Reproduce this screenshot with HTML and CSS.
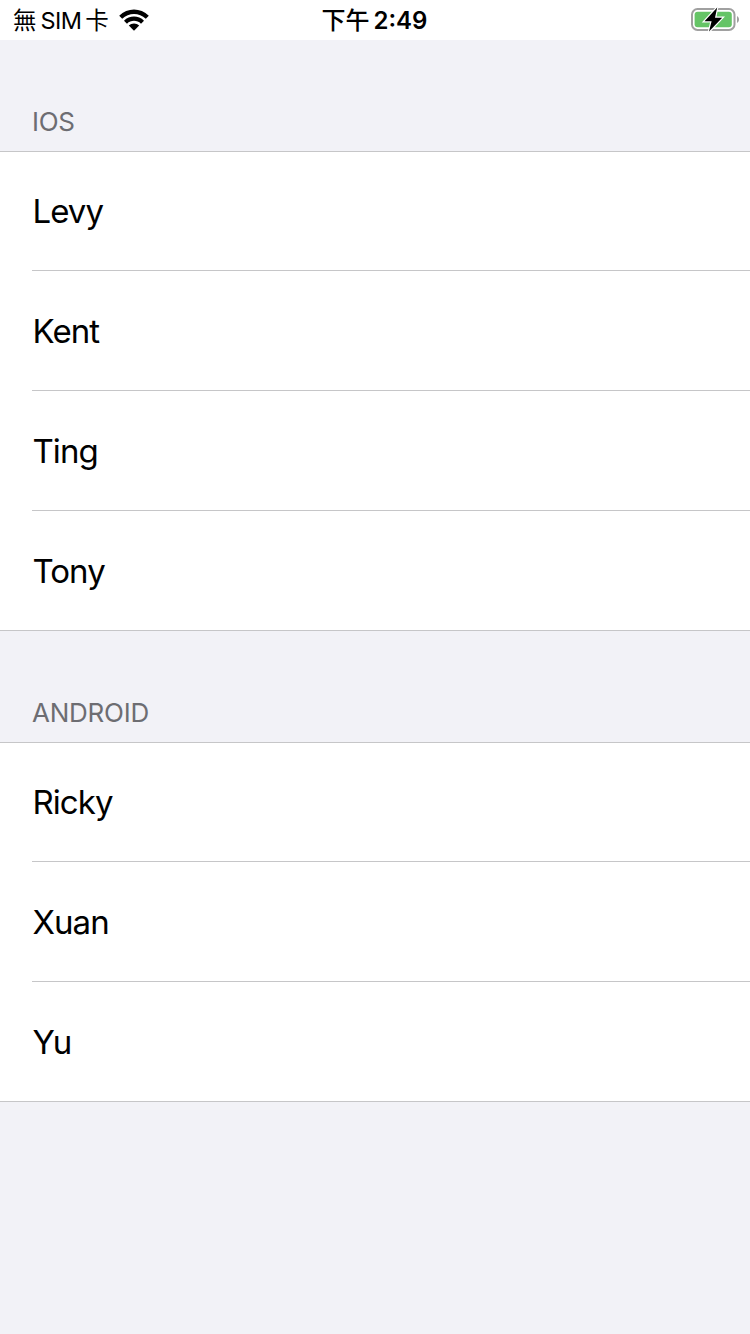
FILE: index.html
```html
<!DOCTYPE html>
<html lang="zh-Hant">
<head>
<meta charset="utf-8">
<title>Contacts</title>
<link rel="stylesheet" href="styles.css">
</head>
<body>
<header class="status-bar">
  <div class="carrier">
    <span class="carrier-name"><span class="cjk">無</span><span class="sim">SIM</span><span class="cjk">卡</span></span>
    <svg class="wifi" viewBox="0 0 30 22" width="30" height="22">
      <path d="M0.2 6.8C8.5-1.6 21.5-1.6 29.8 6.8L26.8 9.8C20.3 3.3 9.7 3.3 3.2 9.8Z"/>
      <path d="M5 11.7C10.5 6.2 19.5 6.2 25 11.7L22 14.7C18.1 10.9 11.9 10.9 8 14.7Z"/>
      <path d="M9.8 16.6C12.6 13.8 17.4 13.8 20.2 16.6L15 21.8Z"/>
    </svg>
  </div>
  <div class="clock"><span class="period">下午</span><span class="time">2:49</span></div>
  <svg class="battery" viewBox="0 0 50 26" width="50" height="26">
    <rect class="shell" x="2" y="2.1" width="42.5" height="20.8" rx="5.5"/>
    <rect class="charge" x="4.6" y="4.8" width="37.2" height="15.4" rx="3"/>
    <path class="cap" d="M47 9C49.7 10.5 49.7 14.5 47 16Z"/>
    <path class="bolt" d="M27.2 0.6L14.5 14.2H21.6L19 24.6L32.2 10.8H25Z"/>
  </svg>
</header>
<main>
  <section>
    <h2 class="section-title">IOS</h2>
    <ul class="list"><li>Levy</li><li>Kent</li><li>Ting</li><li>Tony</li></ul>
  </section>
  <section>
    <h2 class="section-title">ANDROID</h2>
    <ul class="list"><li>Ricky</li><li>Xuan</li><li>Yu</li></ul>
  </section>
</main>
</body>
</html>
```
FILE: styles.css
```css
* { box-sizing: border-box; }
body { margin: 0; min-height: 1334px; background: #f2f2f7; color: #000; font-family: Inter, "Noto Sans CJK TC", sans-serif; }
.status-bar { display: grid; grid-template-columns: 1fr auto 1fr; align-items: center; height: 40px; padding: 0 10px 0 13px; background: #fff; }
.carrier { display: flex; align-items: center; gap: 10px; }
.carrier-name { display: flex; gap: 4px; font-size: 24px; line-height: 40px; }
.sim { padding-top: 1px; font-size: 23.5px; letter-spacing: -0.6px; line-height: 40px; }
.cjk { font-size: 23.5px; line-height: 39px; }
.wifi { margin-bottom: 2px; }
.clock { display: flex; gap: 4px; margin-right: 4px; font-size: 24px; font-weight: 600; line-height: 40px; }
.time { padding-top: 1px; }
.period { font-weight: 500; line-height: 38px; }
.cjk, .period { font-family: "Noto Sans CJK TC", sans-serif; }
.battery { justify-self: end; margin-bottom: 1px; overflow: visible; }
.shell { fill: none; stroke: #a0a0a0; stroke-width: 2; }
.charge { fill: #65c466; }
.cap { fill: #a0a0a0; }
.bolt { fill: #000; stroke: #fff; stroke-width: 2.4; paint-order: stroke; }
.section-title { display: flex; align-items: flex-end; height: 111px; margin: 0; padding: 0 32px 13px; color: #6d6d72; font-size: 26px; font-weight: 400; letter-spacing: -0.25px; line-height: 32px; }
.list { margin: 0; padding: 0; list-style: none; background: #fff; border-top: 1px solid #c6c6c8; border-bottom: 1px solid #c6c6c8; }
.list li { display: flex; align-items: center; height: 120px; margin-left: 32px; padding: 1px 0 0 0.5px; border-bottom: 1px solid #c6c6c8; font-size: 33px; letter-spacing: -0.95px; }
.list li:first-child { height: 119px; padding-top: 0; }
.list li:last-child { height: 119px; border-bottom: 0; }
```
